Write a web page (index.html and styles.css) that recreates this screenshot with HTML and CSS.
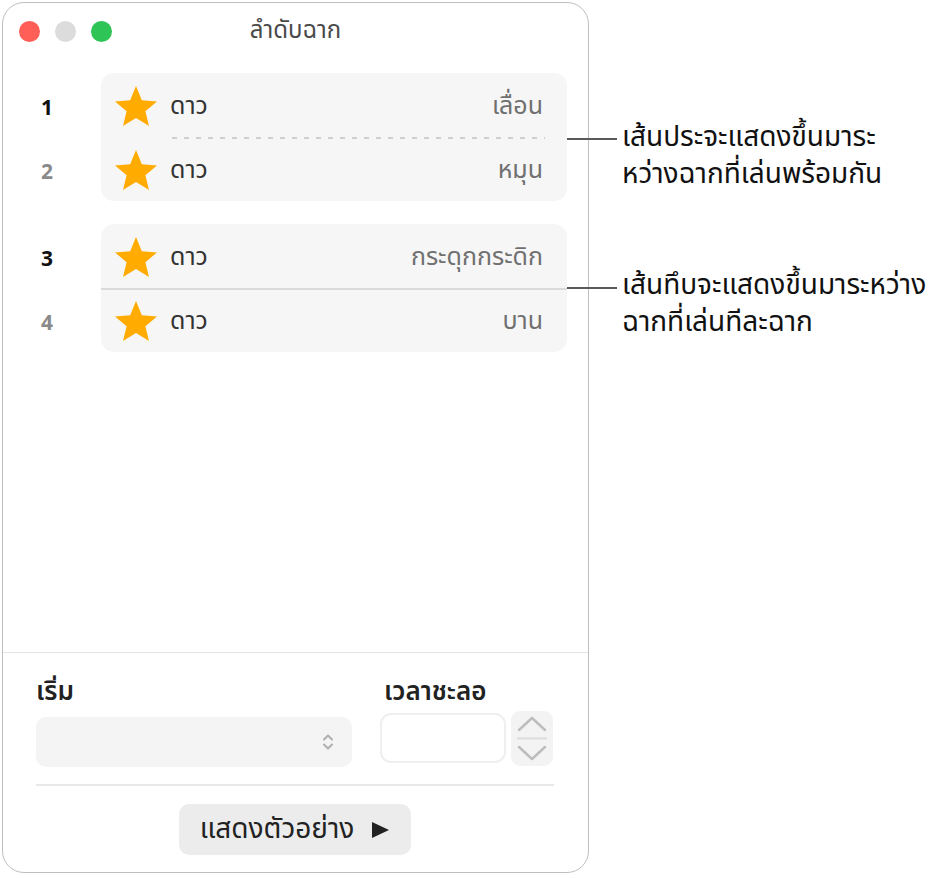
FILE: index.html
```html
<!DOCTYPE html>
<html lang="th">
<head>
  <meta charset="UTF-8" />
  <meta name="viewport" content="width=device-width, initial-scale=1.0" />
  <title>ลำดับฉาก</title>
  <link rel="stylesheet" href="styles.css">
</head>
<body>
  <div class="stage">
    <div class="window">
      <div class="titlebar">
        <div class="lights">
          <span class="light red"></span>
          <span class="light gray"></span>
          <span class="light green"></span>
        </div>
        <div class="title">ลำดับฉาก</div>
        <div></div>
      </div>

      <div class="scenes">
        <div class="group">
          <div class="nums">
            <div class="num">1</div>
            <div class="num muted">2</div>
          </div>
          <div class="box">
            <div class="row">
              <svg class="star" viewBox="1.5 1.5 21 20"><polygon points="12,1.5 14.9,8.6 22.5,9.2 16.7,14.1 18.5,21.5 12,17.5 5.5,21.5 7.3,14.1 1.5,9.2 9.1,8.6" /></svg>
              <span class="name">ดาว</span>
              <span class="effect">เลื่อน</span>
            </div>
            <div class="sep-dashed"></div>
            <div class="row">
              <svg class="star" viewBox="1.5 1.5 21 20"><polygon points="12,1.5 14.9,8.6 22.5,9.2 16.7,14.1 18.5,21.5 12,17.5 5.5,21.5 7.3,14.1 1.5,9.2 9.1,8.6" /></svg>
              <span class="name">ดาว</span>
              <span class="effect">หมุน</span>
            </div>
          </div>
        </div>

        <div class="group">
          <div class="nums">
            <div class="num">3</div>
            <div class="num muted">4</div>
          </div>
          <div class="box">
            <div class="row">
              <svg class="star" viewBox="1.5 1.5 21 20"><polygon points="12,1.5 14.9,8.6 22.5,9.2 16.7,14.1 18.5,21.5 12,17.5 5.5,21.5 7.3,14.1 1.5,9.2 9.1,8.6" /></svg>
              <span class="name">ดาว</span>
              <span class="effect">กระดุกกระดิก</span>
            </div>
            <div class="sep-solid"></div>
            <div class="row">
              <svg class="star" viewBox="1.5 1.5 21 20"><polygon points="12,1.5 14.9,8.6 22.5,9.2 16.7,14.1 18.5,21.5 12,17.5 5.5,21.5 7.3,14.1 1.5,9.2 9.1,8.6" /></svg>
              <span class="name">ดาว</span>
              <span class="effect">บาน</span>
            </div>
          </div>
        </div>
      </div>

      <div class="footer">
        <div class="fields">
          <div class="field">
            <div class="label">เริ่ม</div>
            <div class="select">
              <svg class="updown" viewBox="0 0 14 20" width="14" height="20">
                <path d="M3 7.5 L7 3.5 L11 7.5 M3 12.5 L7 16.5 L11 12.5" />
              </svg>
            </div>
          </div>
          <div class="field">
            <div class="label delay-label">เวลาชะลอ</div>
            <div class="delay-row">
              <div class="delay-input"></div>
              <div class="stepper">
                <svg viewBox="0 0 42 55" width="42" height="55">
                  <path class="chev" d="M8 19 L21 7 L34 19" />
                  <path class="mid" d="M6 27.5 H36" />
                  <path class="chev" d="M8 36 L21 48 L34 36" />
                </svg>
              </div>
            </div>
          </div>
        </div>
        <div class="actions">
          <button class="preview">แสดงตัวอย่าง <span class="play"></span></button>
        </div>
      </div>
    </div>

    <!-- annotations -->
    <div class="callout callout-one">
      <div class="leader"></div>
      <div class="note">เส้นประจะแสดงขึ้นมาระ<br>หว่างฉากที่เล่นพร้อมกัน</div>
    </div>
    <div class="callout callout-two">
      <div class="leader"></div>
      <div class="note">เส้นทึบจะแสดงขึ้นมาระหว่าง<br>ฉากที่เล่นทีละฉาก</div>
    </div>
  </div>
</body>
</html>
```

FILE: styles.css
```css
/* Base */
* {
  margin: 0;
  padding: 0;
  box-sizing: border-box;
}

body {
  background: #fff;
  font-family: "Noto Sans Thai", "Noto Sans", "DejaVu Sans", sans-serif;
  color: #222;
}

.stage {
  position: relative;
  width: 931px;
  height: 878px;
  padding: 2px 0 0 2px;
  overflow: hidden;
}

/* Window */
.window {
  width: 587px;
  height: 871px;
  border: 1px solid #bfbfbf;
  border-radius: 22px;
  background: #fff;
  display: flex;
  flex-direction: column;
  overflow: hidden;
}

.titlebar {
  height: 56px;
  display: grid;
  grid-template-columns: 1fr auto 1fr;
  align-items: center;
}

.lights {
  display: flex;
  gap: 15px;
  padding-left: 16px;
}

.light {
  width: 21px;
  height: 21px;
  border-radius: 50%;
}

.red { background: #ff5f57; }
.gray { background: #dcdcdc; }
.green { background: #2ec556; }

.title {
  font-size: 24px;
  line-height: 30px;
  color: #4a4a4a;
}

/* Scene list */
.scenes {
  flex: 1;
  padding-top: 14px;
  display: flex;
  flex-direction: column;
  gap: 21px;
}

.group {
  display: flex;
}

.nums {
  width: 88px;
  margin-right: 10px;
  padding-top: 2px;
}

.num {
  height: 64px;
  line-height: 64px;
  text-align: center;
  font-family: "Noto Sans", sans-serif;
  font-size: 21px;
  font-weight: 700;
  color: #111;
}

.num.muted {
  color: #8a8a8a;
}

.box {
  width: 466px;
  height: 128px;
  padding-top: 2px;
  background: #f6f6f6;
  border-radius: 13px;
}

.row {
  height: 62px;
  display: flex;
  align-items: center;
  padding: 0 24px 0 14px;
}

.star {
  width: 42px;
  height: 40px;
  fill: #ffab00;
  flex-shrink: 0;
}

.name {
  margin-left: 13px;
  font-size: 25px;
  line-height: 30px;
  color: #333;
}

.effect {
  margin-left: auto;
  font-size: 25px;
  line-height: 30px;
  color: #707070;
}

.sep-dashed {
  height: 2px;
  margin: 0 22px 0 71px;
  background: repeating-linear-gradient(90deg, #cfcfcf 0 5px, transparent 5px 12px);
}

.sep-solid {
  height: 2px;
  background: #dadada;
}

/* Footer */
.footer {
  border-top: 1px solid #e4e4e4;
  padding: 27px 34px 17px 33px;
}

.fields {
  display: flex;
  gap: 28px;
  padding-bottom: 17px;
  border-bottom: 2px solid #e8e8e8;
}

.label {
  height: 24px;
  line-height: 24px;
  font-size: 26px;
  font-weight: 600;
  color: #222;
}

.delay-label {
  padding-left: 4px;
}

.select {
  width: 316px;
  height: 50px;
  margin-top: 13px;
  background: #f4f4f4;
  border-radius: 10px;
  display: flex;
  align-items: center;
  justify-content: flex-end;
  padding-right: 17px;
}

.updown path {
  fill: none;
  stroke: #b0b0b0;
  stroke-width: 2;
  stroke-linecap: round;
  stroke-linejoin: round;
}

.delay-row {
  display: flex;
  align-items: flex-start;
  gap: 5px;
}

.delay-input {
  width: 126px;
  height: 50px;
  margin-top: 9px;
  border: 2px solid #efefef;
  border-radius: 11px;
}

.stepper {
  width: 42px;
  height: 55px;
  margin-top: 7px;
  background: #f3f3f3;
  border-radius: 9px;
}

.stepper svg {
  display: block;
}

.stepper .chev {
  fill: none;
  stroke: #bdbdbd;
  stroke-width: 2.5;
  stroke-linecap: round;
  stroke-linejoin: round;
}

.stepper .mid {
  stroke: #dcdcdc;
  stroke-width: 2;
}

.actions {
  display: flex;
  justify-content: center;
  padding-top: 18px;
  padding-right: 1px;
}

.preview {
  width: 232px;
  height: 51px;
  border: none;
  border-radius: 10px;
  background: #ececec;
  font-family: inherit;
  font-size: 28px;
  color: #222;
  display: flex;
  align-items: center;
  justify-content: center;
  gap: 18px;
}

.play {
  width: 0;
  height: 0;
  border-top: 8px solid transparent;
  border-bottom: 8px solid transparent;
  border-left: 17px solid #222;
}

/* Annotations */
.callout {
  position: absolute;
  left: 567px;
  display: flex;
  align-items: flex-start;
}

.callout-one { top: 119px; }
.callout-two { top: 267px; }

.leader {
  width: 50px;
  height: 2px;
  margin-top: 19px;
  background: #5a5a5a;
}

.callout-two .leader {
  margin-top: 20px;
}

.note {
  margin-left: 5px;
  font-size: 28px;
  line-height: 37px;
  white-space: nowrap;
  color: #111;
}
```
